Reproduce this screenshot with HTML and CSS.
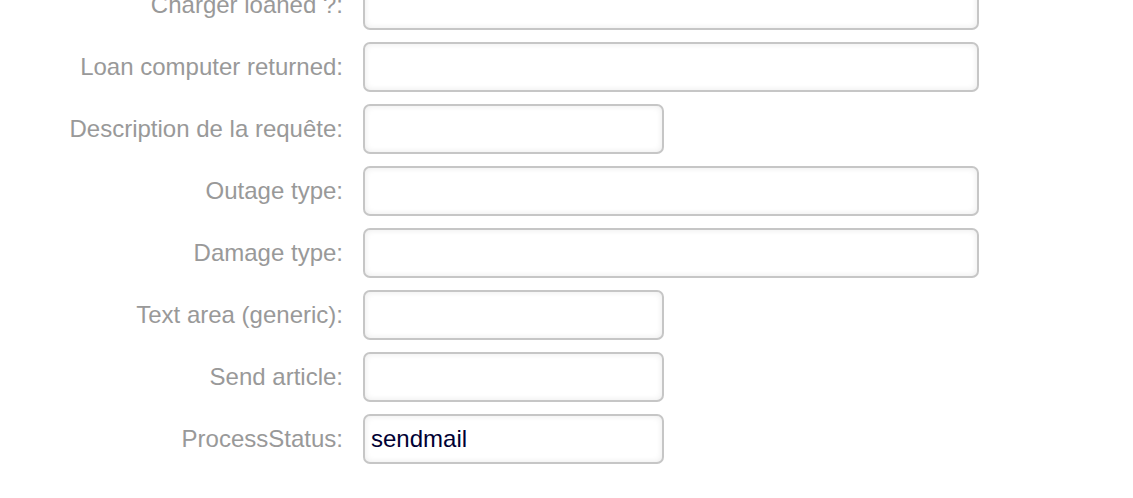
FILE: index.html
```html
<!DOCTYPE html>
<html>
<head>
<meta charset="utf-8">
<link rel="stylesheet" href="styles.css">
</head>
<body>
<form class="form">
  <div class="row"><label class="label">Charger loaned ?:</label><input class="field wide" type="text"></div>
  <div class="row"><label class="label">Loan computer returned:</label><input class="field wide" type="text"></div>
  <div class="row"><label class="label">Description de la requête:</label><input class="field narrow" type="text"></div>
  <div class="row"><label class="label">Outage type:</label><input class="field wide" type="text"></div>
  <div class="row"><label class="label">Damage type:</label><input class="field wide" type="text"></div>
  <div class="row"><label class="label">Text area (generic):</label><input class="field narrow" type="text"></div>
  <div class="row"><label class="label">Send article:</label><input class="field narrow" type="text"></div>
  <div class="row"><label class="label">ProcessStatus:</label><input class="field narrow" type="text" value="sendmail"></div>
</form>
</body>
</html>
```

FILE: styles.css
```css
html, body {
  margin: 0;
  padding: 0;
  background: #fff;
  overflow: hidden;
}
.form {
  margin-top: -20px;
  display: flex;
  flex-direction: column;
  gap: 12px;
  font-family: "Liberation Sans", Arial, sans-serif;
}
.row {
  display: grid;
  grid-template-columns: 343px auto;
  column-gap: 20px;
  align-items: center;
}
.label {
  text-align: right;
  font-size: 24px;
  color: #999;
}
.field {
  box-sizing: border-box;
  height: 50px;
  border: 2px solid #c6c6c6;
  border-radius: 7px;
  background: #fff;
  box-shadow: inset 0 0 6px rgba(0,0,0,0.09);
  font-family: "Liberation Sans", Arial, sans-serif;
  font-size: 24px;
  color: #000033;
  padding: 0 6px;
  outline: none;
}
.wide { width: 616px; }
.narrow { width: 301px; }
```
